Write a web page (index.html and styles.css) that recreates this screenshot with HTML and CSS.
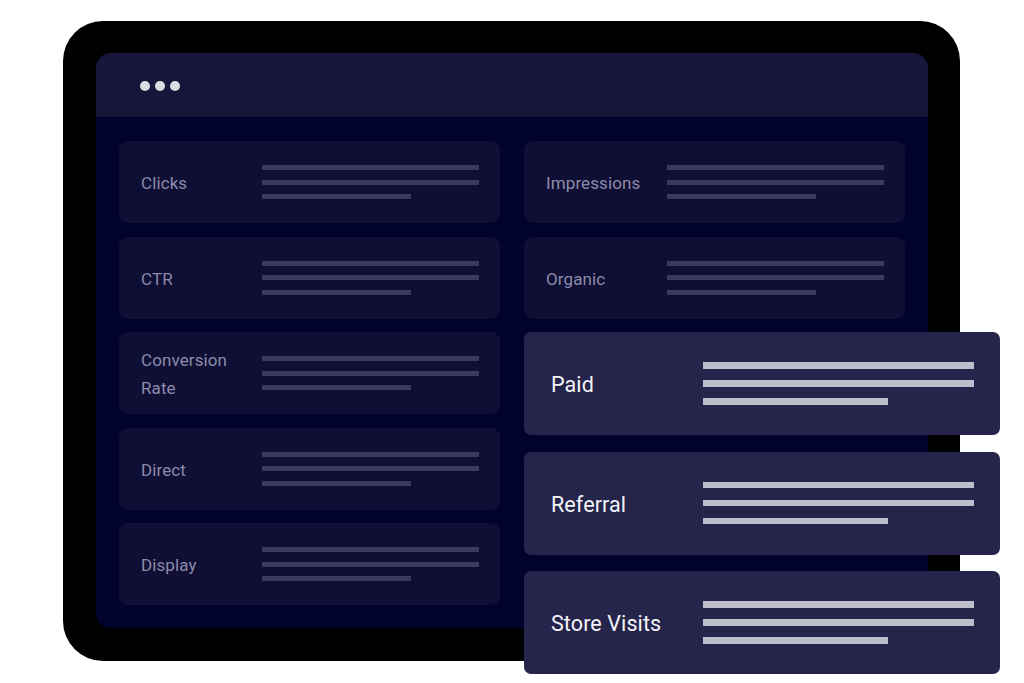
FILE: index.html
```html
<!DOCTYPE html>
<html lang="en">
<head>
<meta charset="utf-8">
<title>Channels dashboard</title>
<link rel="stylesheet" href="styles.css">
</head>
<body>
<div class="stage">
  <div class="device">
    <div class="screen">
      <div class="screen-header">
        <span class="dot"></span><span class="dot"></span><span class="dot"></span>
      </div>
      <div class="grid">
        <div class="card"><div class="label">Clicks</div><div class="lines"><i></i><i></i><i class="short"></i></div></div>
        <div class="card"><div class="label">Impressions</div><div class="lines"><i></i><i></i><i class="short"></i></div></div>
        <div class="card"><div class="label">CTR</div><div class="lines"><i></i><i></i><i class="short"></i></div></div>
        <div class="card"><div class="label">Organic</div><div class="lines"><i></i><i></i><i class="short"></i></div></div>
        <div class="card"><div class="label">Conversion Rate</div><div class="lines"><i></i><i></i><i class="short"></i></div></div>
        <div class="card card-hidden"></div>
        <div class="card"><div class="label">Direct</div><div class="lines"><i></i><i></i><i class="short"></i></div></div>
        <div class="card card-hidden"></div>
        <div class="card"><div class="label">Display</div><div class="lines"><i></i><i></i><i class="short"></i></div></div>
        <div class="card card-hidden"></div>
      </div>
    </div>
  </div>
  <div class="float-stack">
    <div class="big-card"><div class="big-label">Paid</div><div class="big-lines"><i></i><i></i><i class="short"></i></div></div>
    <div class="big-card"><div class="big-label">Referral</div><div class="big-lines"><i></i><i></i><i class="short"></i></div></div>
    <div class="big-card"><div class="big-label">Store Visits</div><div class="big-lines"><i></i><i></i><i class="short"></i></div></div>
  </div>
</div>
</body>
</html>
```

FILE: styles.css
```css
* { box-sizing: border-box; }

html, body {
  margin: 0;
  padding: 0;
  background: #ffffff;
}

body {
  width: 1024px;
  height: 683px;
  overflow: hidden;
  font-family: Roboto, "Noto Sans", "Liberation Sans", sans-serif;
}

.stage {
  position: relative;
  width: 1024px;
  height: 683px;
  padding: 21px 0 0 63px;
}

.device {
  width: 897px;
  height: 640px;
  background: #000000;
  border-radius: 40px;
  padding: 32px 32px 33px 33px;
}

.screen {
  width: 100%;
  height: 100%;
  background: #02022e;
  border-radius: 15px;
  overflow: hidden;
  display: flex;
  flex-direction: column;
}

.screen-header {
  height: 64px;
  flex: 0 0 64px;
  background: #16163a;
  display: flex;
  align-items: center;
  gap: 5px;
  padding: 2px 0 0 44px;
}

.dot {
  width: 10px;
  height: 10px;
  border-radius: 50%;
  background: #dcdce2;
}

.grid {
  display: grid;
  grid-template-columns: 381px 381px;
  grid-auto-rows: 82px;
  column-gap: 24px;
  row-gap: 13.5px;
  padding: 24px 23px 0 23px;
}

.card {
  background: #0f0e34;
  border-radius: 9px;
  display: flex;
  align-items: center;
  padding: 0 21px 0 22px;
}

.card-hidden {
  visibility: hidden;
}

.label {
  flex: 0 0 121px;
  width: 121px;
  padding: 2px 14px 0 0;
  color: #8c8baa;
  font-size: 17px;
  font-weight: 400;
  line-height: 28px;
  letter-spacing: 0.1px;
}

.lines {
  flex: 1;
  display: flex;
  flex-direction: column;
  gap: 9.5px;
}

.lines i {
  display: block;
  height: 5px;
  width: 217px;
  background: #3a395f;
}

.lines i.short {
  width: 149px;
}

.float-stack {
  position: absolute;
  left: 524px;
  top: 332px;
  width: 476px;
  display: flex;
  flex-direction: column;
  gap: 16.5px;
}

.big-card {
  height: 103px;
  background: #25244a;
  border-radius: 7px;
  display: flex;
  align-items: center;
  padding: 0 26px 0 27px;
}

.big-label {
  flex: 0 0 152px;
  padding-top: 2px;
  color: #f4f4f8;
  font-size: 21.5px;
  letter-spacing: 0.1px;
}

.big-lines {
  flex: 1;
  display: flex;
  flex-direction: column;
  gap: 11.5px;
}

.big-lines i {
  display: block;
  height: 6.5px;
  width: 271px;
  background: #bebdcc;
}

.big-lines i.short {
  width: 185px;
}
```
